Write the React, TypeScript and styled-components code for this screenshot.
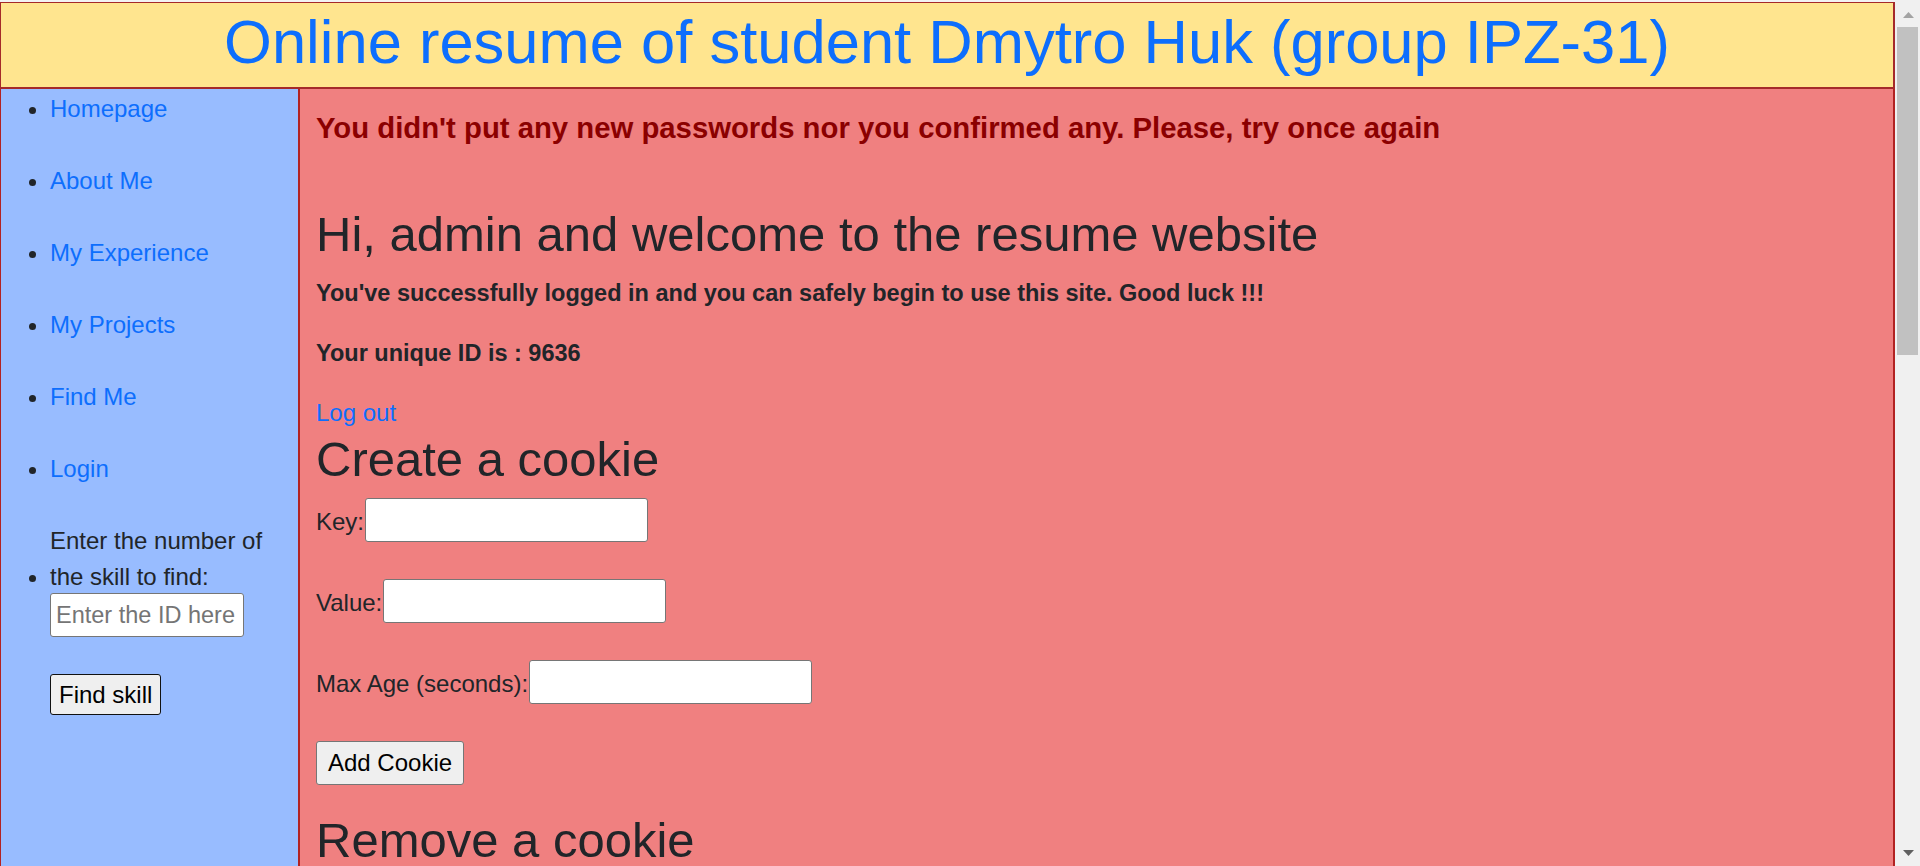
import React from "react";
import styled, { createGlobalStyle } from "styled-components";

const GlobalStyle = createGlobalStyle`
  html, body {
    margin: 0;
    height: 100%;
    overflow: hidden;
    background: #f3f3f3;
  }
  body {
    font-family: "Liberation Sans", Arial, sans-serif;
    color: #212529;
  }
  #root {
    height: 100%;
  }
  * {
    box-sizing: border-box;
  }
`;

const Frame = styled.div`
  display: flex;
  height: 100vh;
  background: #f3f3f3;
`;

const ContentPane = styled.div`
  flex: 1;
  min-width: 0;
  overflow: hidden;
  padding-top: 2px;
`;

const ScrollRail = styled.div`
  width: 25px;
  flex: none;
  display: flex;
  flex-direction: column;
  background: #f0f0f0;
`;

const ArrowButton = styled.div<{ $down?: boolean }>`
  height: 26px;
  flex: none;
  display: flex;
  justify-content: center;
  align-items: ${(p) => (p.$down ? "flex-start" : "flex-end")};
  padding: ${(p) => (p.$down ? "10px 0 0" : "0 0 8px")};
  padding-left: 1px;
`;

const Track = styled.div`
  flex: 1;
  padding: 1px 2px 0;
`;

const Thumb = styled.div`
  height: 328px;
  background: #c1c1c1;
`;

const Page = styled.div`
  display: flex;
  flex-direction: column;
`;

const Banner = styled.header`
  background: #ffe58f;
  border: 1px solid #a52a2a;
  border-right-width: 2px;
  border-bottom-width: 2px;
  text-align: center;
`;

const Title = styled.h1`
  margin: 3px 0 9px;
  font-size: 61.5px;
  line-height: 72px;
  font-weight: 400;
  color: #0d6efd;
`;

const Columns = styled.div`
  display: flex;
  min-height: 2066px;
`;

const Sidebar = styled.nav`
  width: 300px;
  flex: none;
  background: #98bcff;
  border-left: 1px solid #b22222;
  border-right: 2px solid #b22222;
`;

const NavList = styled.ul`
  margin: 0;
  padding: 2px 0 0 49px;
  font-size: 24px;
  line-height: 36px;
  list-style: disc;
`;

const NavItem = styled.li`
  margin-bottom: 36px;
`;

const NavLink = styled.a`
  color: #0d6efd;
  text-decoration: none;
`;

const SkillLabel = styled.label`
  display: inline-block;
  vertical-align: baseline;
`;

const SkillInput = styled.input`
  display: block;
  width: 194px;
  height: 44px;
  margin-top: -2px;
  padding: 0 4px 0 5px;
  border: 1px solid #767676;
  border-radius: 3px;
  background: #fff;
  font-family: inherit;
  font-size: 23.5px;
  color: #212529;
  &::placeholder {
    color: #757575;
  }
`;

const PlainButton = styled.button<{ $dark?: boolean }>`
  display: block;
  height: ${(p) => (p.$dark ? "41px" : "44px")};
  padding: 0 ${(p) => (p.$dark ? "8px" : "11px")};
  border: 1px solid ${(p) => (p.$dark ? "#111" : "#767676")};
  border-radius: 3px;
  background: #efefef;
  font-family: inherit;
  font-size: 24px;
  line-height: 1;
  color: #000;
`;

const FindButton = styled(PlainButton)`
  margin-top: 37px;
`;

const Main = styled.main`
  flex: 1;
  background: #f08080;
  border-right: 2px solid #b22222;
  padding: 21px 16px 40px;
`;

const ErrorNote = styled.h5`
  margin: 0 0 60px;
  font-size: 29.3px;
  line-height: 36px;
  font-weight: 700;
  color: #8b0000;
`;

const Heading = styled.h2<{ $after?: number }>`
  margin: 0 0 ${(p) => p.$after ?? 10}px;
  font-size: 49px;
  line-height: 57.6px;
  font-weight: 400;
  color: #212529;
`;

const Strong = styled.p`
  margin: 0 0 24px;
  font-size: 23.5px;
  line-height: 36px;
  font-weight: 700;
`;

const LinkLine = styled.div`
  font-size: 24px;
  line-height: 36px;
`;

const BlueLink = styled.a`
  color: #0d6efd;
  text-decoration: none;
`;

const CookieForm = styled.form<{ $after?: number }>`
  display: flex;
  flex-direction: column;
  align-items: flex-start;
  gap: 37px;
  margin-bottom: ${(p) => p.$after ?? 27}px;
`;

const FieldRow = styled.div`
  display: flex;
  align-items: flex-start;
  height: 44px;
  gap: 1px;
`;

const FieldLabel = styled.label`
  margin-top: 6px;
  font-size: 24px;
  line-height: 36px;
`;

const TextInput = styled.input`
  width: 283px;
  height: 44px;
  padding: 0 6px;
  border: 1px solid #767676;
  border-radius: 3px;
  background: #fff;
  font-family: inherit;
  font-size: 24px;
`;

const Arrow = ({ down, color }: { down?: boolean; color: string }) => (
  <svg width="11" height="6" viewBox="0 0 11 6" aria-hidden="true">
    <path d={down ? "M0 0H11L5.5 6Z" : "M0 6H11L5.5 0Z"} fill={color} />
  </svg>
);

const navLinks = ["Homepage", "About Me", "My Experience", "My Projects", "Find Me", "Login"];

export default function App() {
  return (
    <>
      <GlobalStyle />
      <Frame>
        <ContentPane>
          <Page>
            <Banner>
              <Title>Online resume of student Dmytro Huk (group IPZ-31)</Title>
            </Banner>
            <Columns>
              <Sidebar>
                <NavList>
                  {navLinks.map((l) => (
                    <NavItem key={l}>
                      <NavLink href="#">{l}</NavLink>
                    </NavItem>
                  ))}
                  <NavItem>
                    <SkillLabel htmlFor="skill">Enter the number of the skill to find:</SkillLabel>
                    <SkillInput id="skill" placeholder="Enter the ID here" />
                    <FindButton type="button" $dark>
                      Find skill
                    </FindButton>
                  </NavItem>
                </NavList>
              </Sidebar>
              <Main>
                <ErrorNote>You didn't put any new passwords nor you confirmed any. Please, try once again</ErrorNote>
                <Heading $after={11}>Hi, admin and welcome to the resume website</Heading>
                <Strong>You've successfully logged in and you can safely begin to use this site. Good luck !!!</Strong>
                <Strong>Your unique ID is : 9636</Strong>
                <LinkLine>
                  <BlueLink href="#">Log out</BlueLink>
                </LinkLine>
                <Heading>Create a cookie</Heading>
                <CookieForm onSubmit={(e) => e.preventDefault()}>
                  <FieldRow>
                    <FieldLabel htmlFor="ck-key">Key: </FieldLabel>
                    <TextInput id="ck-key" />
                  </FieldRow>
                  <FieldRow>
                    <FieldLabel htmlFor="ck-value">Value: </FieldLabel>
                    <TextInput id="ck-value" />
                  </FieldRow>
                  <FieldRow>
                    <FieldLabel htmlFor="ck-age">Max Age (seconds): </FieldLabel>
                    <TextInput id="ck-age" />
                  </FieldRow>
                  <PlainButton type="submit">Add Cookie</PlainButton>
                </CookieForm>
                <Heading>Remove a cookie</Heading>
                <CookieForm onSubmit={(e) => e.preventDefault()}>
                  <FieldRow>
                    <FieldLabel htmlFor="rm-key">Key: </FieldLabel>
                    <TextInput id="rm-key" />
                  </FieldRow>
                  <PlainButton type="submit">Remove Cookie</PlainButton>
                </CookieForm>
              </Main>
            </Columns>
          </Page>
        </ContentPane>
        <ScrollRail aria-hidden="true">
          <ArrowButton>
            <Arrow color="#a3a3a3" />
          </ArrowButton>
          <Track>
            <Thumb />
          </Track>
          <ArrowButton $down>
            <Arrow down color="#606060" />
          </ArrowButton>
        </ScrollRail>
      </Frame>
    </>
  );
}
